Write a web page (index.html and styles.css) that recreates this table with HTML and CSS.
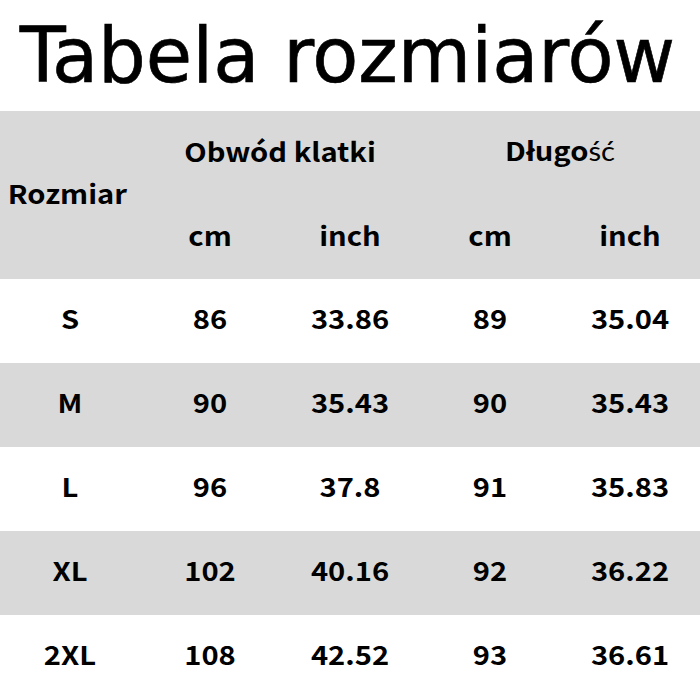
FILE: index.html
```html
<!DOCTYPE html>
<html lang="pl">
<head>
<meta charset="utf-8">
<link rel="stylesheet" href="styles.css">
</head>
<body>
<div class="title"><span class="title-text">Tabela rozmiarów</span></div>
<div class="chart-wrap">
<table class="chart">
  <colgroup><col><col><col><col><col></colgroup>
  <tr class="gray">
    <th rowspan="2" class="size-head">Rozmiar</th>
    <th colspan="2">Obwód klatki</th>
    <th colspan="2">Długo<span class="alt">ść</span></th>
  </tr>
  <tr class="gray">
    <th>cm</th><th>inch</th><th>cm</th><th>inch</th>
  </tr>
  <tr><td>S</td><td>86</td><td>33.86</td><td>89</td><td>35.04</td></tr>
  <tr class="gray"><td>M</td><td>90</td><td>35.43</td><td>90</td><td>35.43</td></tr>
  <tr><td>L</td><td>96</td><td>37.8</td><td>91</td><td>35.83</td></tr>
  <tr class="gray"><td>XL</td><td>102</td><td>40.16</td><td>92</td><td>36.22</td></tr>
  <tr><td>2XL</td><td>108</td><td>42.52</td><td>93</td><td>36.61</td></tr>
</table>
</div>
</body>
</html>
```
FILE: styles.css
```css
html, body {
  margin: 0;
  padding: 0;
  background: #ffffff;
  overflow: hidden;
}
.title {
  height: 111px;
  line-height: 111px;
  text-align: center;
  padding-right: 6px;
  font-family: "DejaVu Sans Condensed", "DejaVu Sans", sans-serif;
  font-size: 77px;
  color: #000;
  white-space: nowrap;
}
.title-text {
  display: inline-block;
  transform: scaleX(1.087);
  -webkit-text-stroke: 0.6px #000;
}
.chart-wrap {
  width: 700px;
  overflow: hidden;
}
.chart {
  width: 625px;
  border-collapse: collapse;
  table-layout: fixed;
  transform: scaleX(1.12);
  transform-origin: left top;
  font-family: "Noto Sans CJK SC", "Noto Sans", sans-serif;
  font-weight: 700;
  font-size: 26px;
  color: #000;
}
.chart col { width: 125px; }
.chart tr { height: 84px; }
.chart th, .chart td {
  padding: 0 0 7px 0;
  text-align: center;
  vertical-align: middle;
  font-weight: 700;
}
.chart th { padding-bottom: 6px; }
.chart .size-head {
  text-align: left;
  padding-left: 7px;
}
.gray { background: #d9d9d9; }
.alt {
  font-family: "Lato", sans-serif;
  font-weight: 400;
}
```
